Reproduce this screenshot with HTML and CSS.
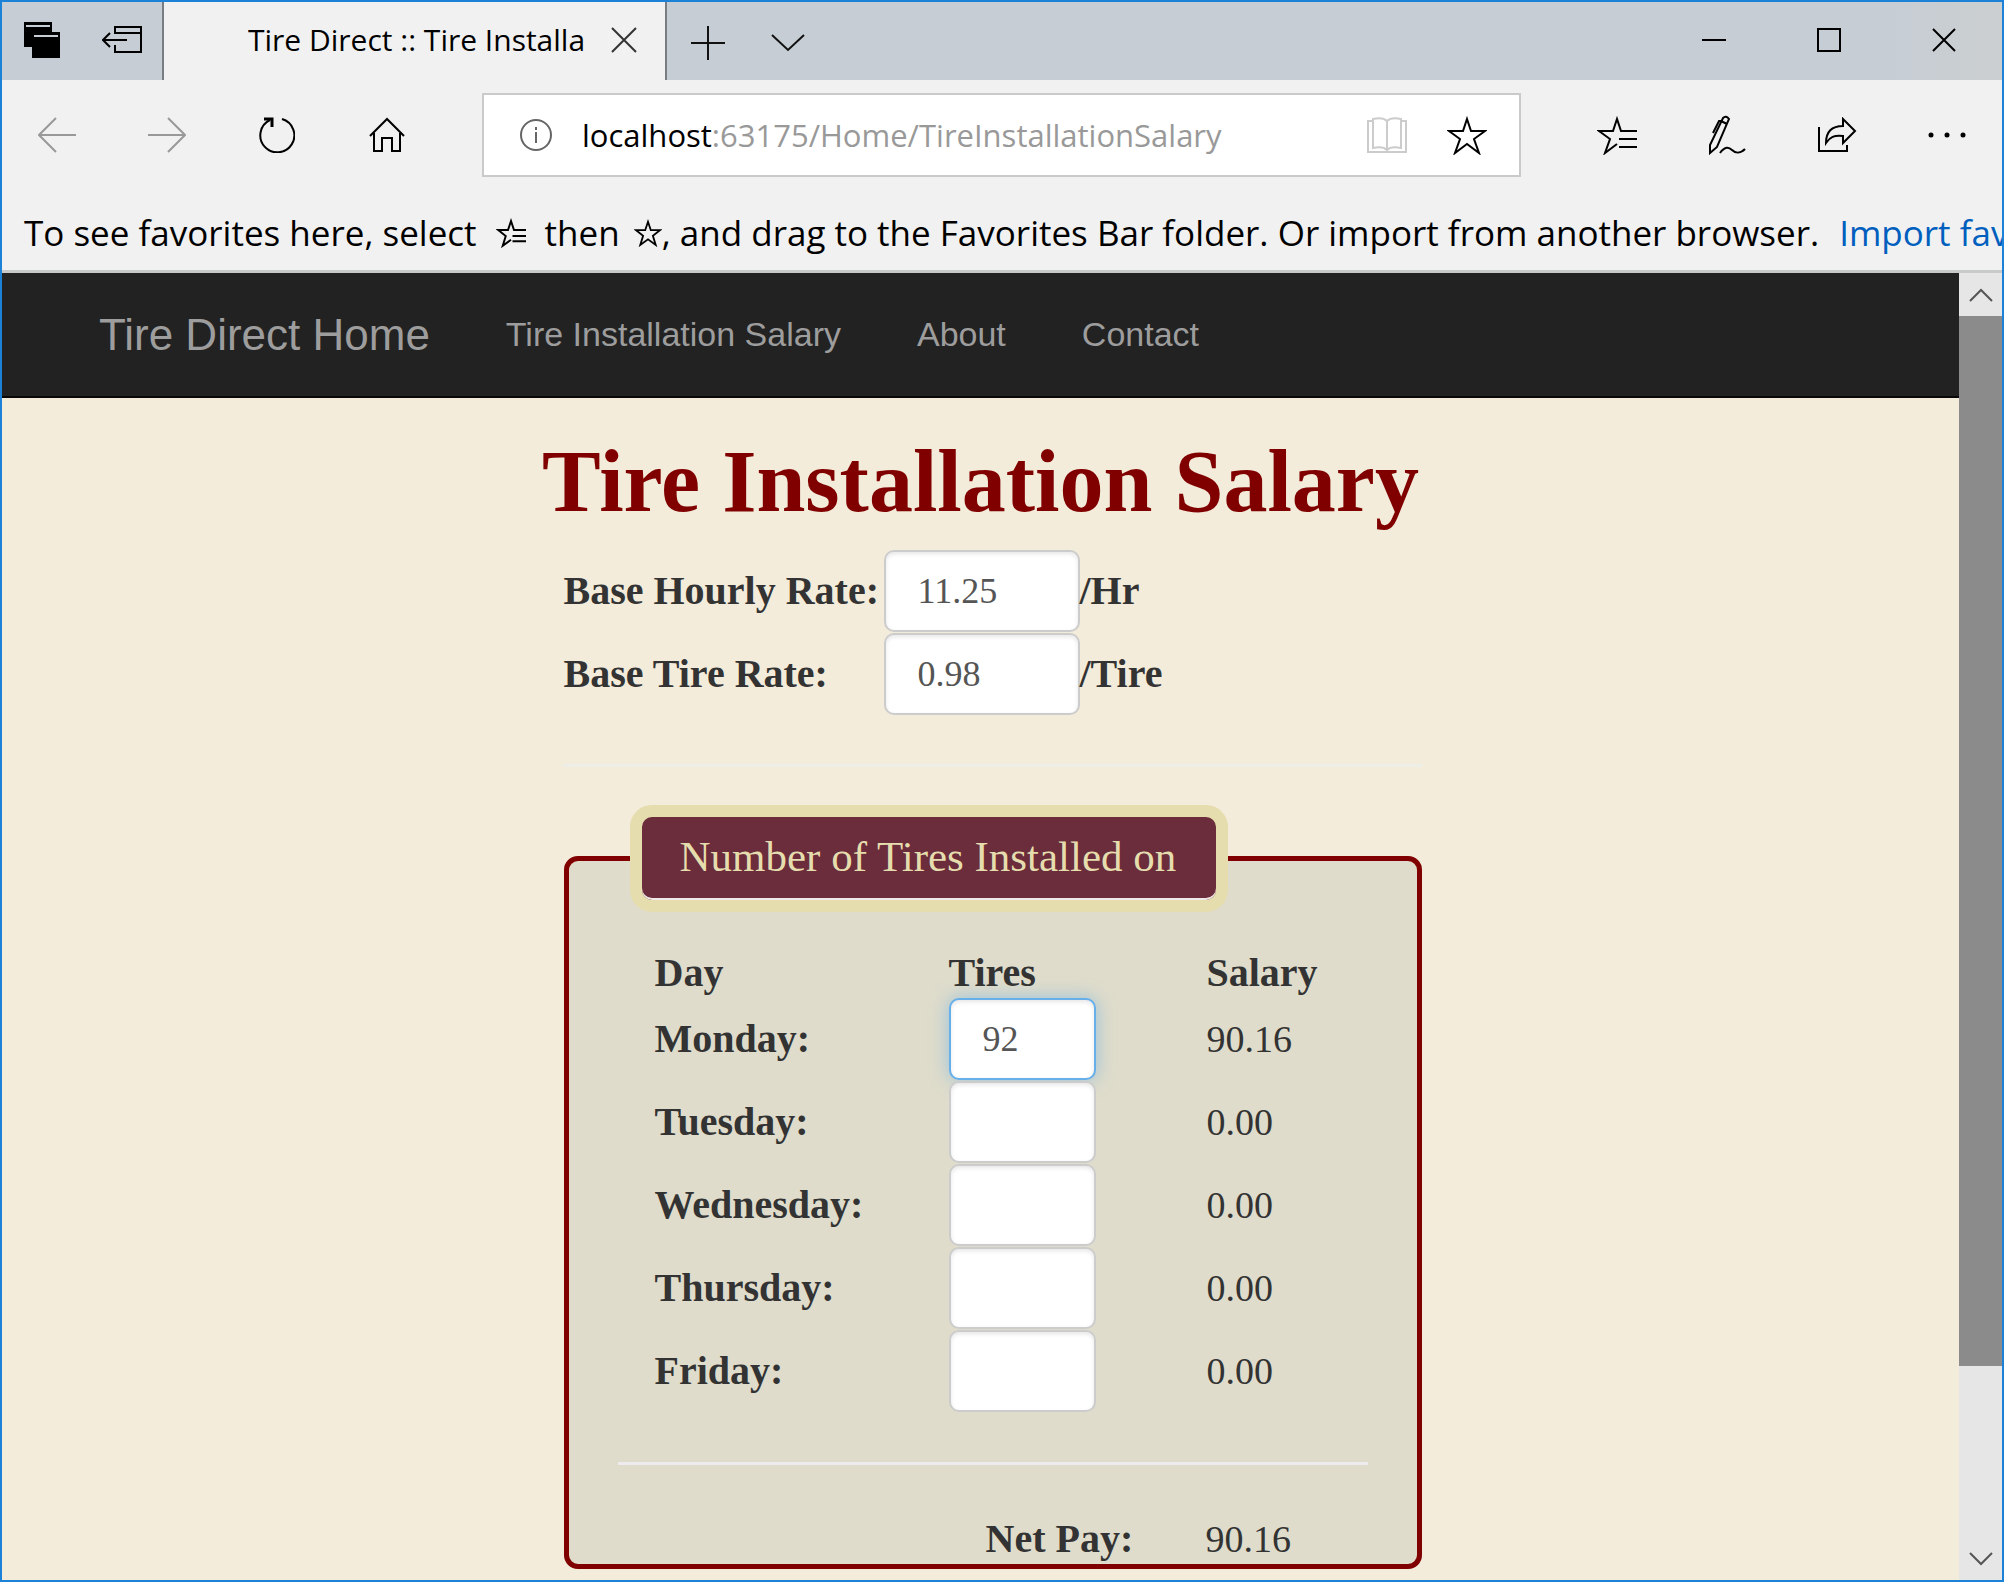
FILE: index.html
```html
<!DOCTYPE html>
<html lang="en">
<head>
<meta charset="utf-8">
<title>Tire Direct :: Tire Installation Salary</title>
<link rel="stylesheet" href="styles.css">
</head>
<body>
<div class="window">
  <header class="tabstrip">
    <div class="tab-tools">
      <button class="icon-btn" aria-label="Tabs you've set aside"><svg width="36" height="36" viewBox="0 0 36 36"><path d="M0 0h28v10h8v26H8V25H0z" fill="#000"/><path d="M2 4h24M10 14h24" stroke="#c6cdd5" stroke-width="2"/></svg></button>
      <button class="icon-btn" aria-label="Set these tabs aside"><svg width="40" height="28" viewBox="0 0 40 28" fill="none" stroke="#000" stroke-width="2"><path d="M13 8V1h26v25H13v-7M13 7h26M25 14H1M8 7l-7 7 7 7"/></svg></button>
    </div>
    <div class="tab">
      <span class="tab-title">Tire Direct :: Tire Installation Salary</span>
      <button class="icon-btn" aria-label="Close tab"><svg width="26" height="26" viewBox="0 0 26 26" stroke="#333" stroke-width="2"><path d="M1 1l24 24M25 1L1 25"/></svg></button>
    </div>
    <div class="new-tab">
      <button class="icon-btn" aria-label="New tab"><svg width="34" height="34" viewBox="0 0 34 34" stroke="#111" stroke-width="2"><path d="M17 0v34M0 17h34"/></svg></button>
      <button class="icon-btn" aria-label="Tab previews"><svg width="34" height="18" viewBox="0 0 34 18" fill="none" stroke="#111" stroke-width="2"><path d="M1 1l16 15L33 1"/></svg></button>
    </div>
    <div class="caption">
      <button class="icon-btn" aria-label="Minimize"><svg width="24" height="24" viewBox="0 0 24 24" stroke="#000" stroke-width="2"><path d="M0 12h24"/></svg></button>
      <button class="icon-btn" aria-label="Maximize"><svg width="24" height="24" viewBox="0 0 24 24" fill="none" stroke="#000" stroke-width="2"><path d="M1 1h22v22H1z"/></svg></button>
      <button class="icon-btn" aria-label="Close"><svg width="24" height="24" viewBox="0 0 24 24" stroke="#000" stroke-width="2"><path d="M1 1l22 22M23 1L1 23"/></svg></button>
    </div>
  </header>

  <div class="toolbar">
    <button class="icon-btn" aria-label="Back"><svg width="38" height="36" viewBox="0 0 38 36" fill="none" stroke="#999" stroke-width="2"><path d="M38 18H1M18 1L1 18l17 17"/></svg></button>
    <button class="icon-btn" aria-label="Forward"><svg width="38" height="36" viewBox="0 0 38 36" fill="none" stroke="#999" stroke-width="2"><path d="M0 18h37M20 1l17 17-17 17"/></svg></button>
    <button class="icon-btn" aria-label="Refresh"><svg width="36" height="36" viewBox="0 0 36 36" fill="none" stroke="#000" stroke-width="2"><path d="M23 2a17 17 0 1 1-12 1"/><path d="M5 2h8v8" stroke-width="3"/></svg></button>
    <button class="icon-btn" aria-label="Home"><svg width="36" height="36" viewBox="0 0 36 36" fill="none" stroke="#000" stroke-width="2"><path d="M1 19L18 2l17 17M5 16v18h8V21h10v13h8V16"/></svg></button>
    <div class="address">
      <svg width="32" height="32" viewBox="0 0 32 32" fill="none" stroke="#666" stroke-width="2"><circle cx="16" cy="16" r="15"/><path d="M16 13v11M16 8v3"/></svg>
      <span class="url">localhost<span class="url-path">:63175/Home/TireInstallationSalary</span></span>
      <button class="icon-btn" aria-label="Reading view"><svg width="40" height="36" viewBox="0 0 40 36" fill="none" stroke="#ccc" stroke-width="2"><path d="M20 4c-3-3-9-3-14-2v29c5-1 11-1 14 2 3-3 9-3 14-2V2c-5-1-11-1-14 2zM20 4v29M6 4H1v31h38V4h-5"/></svg></button>
      <button class="icon-btn" aria-label="Add to favorites"><svg width="40" height="40" viewBox="0 0 40 40" fill="none" stroke="#000" stroke-width="2"><path d="M20 4l4 12h14l-11 8 5 14-12-9-12 9 5-14-11-8h14z"/></svg></button>
    </div>
    <button class="icon-btn" aria-label="Hub"><svg width="40" height="40" viewBox="0 0 40 40" fill="none" stroke="#000" stroke-width="2"><path d="M40 16H24L20 4l-4 12H2l11 8-5 14 12-9M22 24h18M22 32h18"/></svg></button>
    <button class="icon-btn" aria-label="Make a web note"><svg width="38" height="40" viewBox="0 0 38 40" fill="none" stroke="#000" stroke-width="2"><path d="M2 38V30L15 3q3-3 6 1L9 32zM13 6l6 3M15 6h-4L5 18"/><path d="M12 38c5-7 9-6 12-3s8 4 13-1"/></svg></button>
    <button class="icon-btn" aria-label="Share"><svg width="40" height="36" viewBox="0 0 40 36" fill="none" stroke="#000" stroke-width="2"><path d="M2 10v24h28v-6M9 26C9 14 15 9 26 9V2l12 12-12 12v-7C17 18 13 20 9 26z"/></svg></button>
    <button class="icon-btn" aria-label="More"><svg width="38" height="6" viewBox="0 0 38 6"><circle cx="3" cy="3" r="2.5"/><circle cx="19" cy="3" r="2.5"/><circle cx="35" cy="3" r="2.5"/></svg></button>
  </div>

  <div class="favorites">
    <span>To see favorites here, select</span>
    <svg class="fav-hub" width="30" height="30" viewBox="0 0 40 40" fill="none" stroke="#000" stroke-width="2.6"><path d="M40 16H24L20 4l-4 12H3l10 8-4 13 11-8M22 24h18M22 31h18"/></svg>
    <span>then</span>
    <svg class="fav-star" width="28" height="28" viewBox="0 0 40 40" fill="none" stroke="#000" stroke-width="2.6"><path d="M20 4l4 12h13l-10 8 4 13-11-8-11 8 4-13-10-8h13z"/></svg>
    <span>, and drag to the Favorites Bar folder. Or import from another browser.</span>
    <a class="import" href="#">Import favorites</a>
  </div>

  <div class="viewport">
    <div class="page">
      <nav class="navbar">
        <a class="brand" href="#">Tire Direct Home</a>
        <a href="#">Tire Installation Salary</a>
        <a href="#">About</a>
        <a href="#">Contact</a>
      </nav>
      <main class="content">
        <h1>Tire Installation Salary</h1>
        <form>
          <table class="rates">
            <tr><th><label for="hourly">Base Hourly Rate:</label></th><td><input class="field wide" id="hourly" type="text" value="11.25"></td><td>/Hr</td></tr>
            <tr><th><label for="tire">Base Tire Rate:</label></th><td><input class="field wide" id="tire" type="text" value="0.98"></td><td>/Tire</td></tr>
          </table>
          <hr>
          <fieldset>
            <legend>Number of Tires Installed on</legend>
            <table class="days">
              <tr class="head"><th>Day</th><th>Tires</th><th>Salary</th></tr>
              <tr><th><label for="mon">Monday:</label></th><td><input class="field active" id="mon" type="text" value="92"></td><td>90.16</td></tr>
              <tr><th><label for="tue">Tuesday:</label></th><td><input class="field" id="tue" type="text"></td><td>0.00</td></tr>
              <tr><th><label for="wed">Wednesday:</label></th><td><input class="field" id="wed" type="text"></td><td>0.00</td></tr>
              <tr><th><label for="thu">Thursday:</label></th><td><input class="field" id="thu" type="text"></td><td>0.00</td></tr>
              <tr><th><label for="fri">Friday:</label></th><td><input class="field" id="fri" type="text"></td><td>0.00</td></tr>
            </table>
            <hr>
            <div class="net"><strong>Net Pay:</strong><output>90.16</output></div>
          </fieldset>
        </form>
      </main>
    </div>
    <div class="scrollbar">
      <button class="icon-btn" aria-label="Scroll up"><svg width="24" height="14" viewBox="0 0 24 14" fill="none" stroke="#555" stroke-width="2"><path d="M1 13L12 2l11 11"/></svg></button>
      <div class="track"><div class="thumb"></div></div>
      <button class="icon-btn" aria-label="Scroll down"><svg width="24" height="14" viewBox="0 0 24 14" fill="none" stroke="#555" stroke-width="2"><path d="M1 1l11 11L23 1"/></svg></button>
    </div>
  </div>
</div>
</body>
</html>
```
FILE: styles.css
```css
* { box-sizing: border-box; }

body {
  margin: 0;
  color: #000;
  font-family: "Open Sans", "Noto Sans", sans-serif;
}

.window {
  display: flex;
  flex-direction: column;
  height: 100vh;
  overflow: hidden;
  border: 2px solid #1c82d8;
  background: #f1f1f1;
}

.icon-btn {
  display: flex;
  align-items: center;
  justify-content: center;
  flex: none;
  padding: 0;
  border: 0;
  background: none;
}

svg { flex: none; }

/* Tab strip */
.tabstrip {
  display: flex;
  flex: none;
  height: 78px;
  background: linear-gradient(90deg, #c6cdd5 94%, #cbcfd0);
}

.tab-tools {
  display: flex;
  width: 162px;
  padding-bottom: 2px;
  border-right: 2px solid #777d83;
}

.tab-tools .icon-btn { width: 80px; }

.tab {
  display: flex;
  align-items: center;
  width: 503px;
  padding: 0 28px 2px 84px;
  border-right: 2px solid #777d83;
  background: #f1f1f1;
}

.tab-title {
  flex: 1;
  overflow: hidden;
  margin-right: 26px;
  font-size: 30px;
  line-height: 44px;
  white-space: nowrap;
}

.new-tab { display: flex; margin-left: 1px; }
.new-tab .icon-btn { width: 80px; padding-top: 4px; }
.caption { display: flex; margin-left: auto; padding: 0 1px 2px 0; }
.caption .icon-btn { width: 115px; }

/* Toolbar */
.toolbar {
  display: flex;
  flex: none;
  align-items: center;
  height: 110px;
}

.toolbar > .icon-btn { width: 110px; height: 80px; }

.address {
  display: flex;
  flex: 1;
  align-items: center;
  min-width: 0;
  height: 84px;
  margin: 0 41px 0 40px;
  padding: 0 32px 0 36px;
  border: 2px solid #cacaca;
  background: #fff;
}

.address .icon-btn + .icon-btn { margin-left: 40px; }

.url {
  flex: 1;
  margin-left: 30px;
  overflow: hidden;
  font-size: 31px;
  line-height: 44px;
  white-space: nowrap;
}

.url-path { color: #999; }

/* Favorites bar */
.favorites {
  display: flex;
  flex: none;
  align-items: center;
  height: 83px;
  padding: 5px 0 0 22px;
  overflow: hidden;
  border-bottom: 3px solid #c8cac9;
  font-size: 35px;
  line-height: 48px;
  white-space: nowrap;
}

.fav-hub { margin: 0 19px; }
.fav-star { margin-left: 14px; }
.import { margin-left: 20px; color: #005fbe; text-decoration: none; }

/* Web page */
.viewport { display: flex; flex: 1; min-height: 0; }

.page {
  flex: 1;
  overflow: hidden;
  background: #f3ecda;
  color: #333;
  font-family: "Liberation Serif", serif;
}

.navbar {
  display: flex;
  align-items: center;
  gap: 76px;
  height: 125px;
  padding: 0 97px;
  border-bottom: 2px solid #080808;
  background: #222;
  font-family: "Liberation Sans", Arial, sans-serif;
  font-size: 34px;
}

.navbar a { color: #9d9d9d; text-decoration: none; }
.navbar .brand { font-size: 44px; }

.content {
  width: 882px;
  max-width: 100%;
  margin: 0 auto;
  padding-left: 24px;
}

h1 {
  margin: 36px 0 19px -24px;
  color: #800000;
  font-size: 88px;
  line-height: 96px;
  text-align: center;
  white-space: nowrap;
}

table { border-spacing: 0; }
th, td { height: 83px; padding: 0; text-align: left; }
th { font-size: 40px; }
td { font-size: 38px; }

.rates th { width: 320px; }
.rates td:last-child { font-size: 40px; font-weight: bold; }

.field {
  display: block;
  width: 147px;
  height: 82px;
  padding: 0 32px;
  border: 2px solid #ccc;
  border-radius: 10px;
  background: #fff;
  box-shadow: inset 0 2px 4px rgba(0, 0, 0, .1);
  color: #555;
  font-family: inherit;
  font-size: 36px;
}

.wide { width: 196px; }

.active {
  border-color: #66afe9;
  box-shadow: inset 0 2px 4px rgba(0, 0, 0, .1), 0 0 18px rgba(102, 175, 233, .6);
}

hr {
  height: 3px;
  margin: 49px 0 38px;
  border: 0;
  background: #eeeee8;
}

fieldset {
  margin: 0;
  padding: 0 49px;
  border: 5px solid #800000;
  border-radius: 14px;
  background: #dfdccb;
}

legend {
  height: 107px;
  margin-left: 12px;
  padding: 0 40px 0 38px;
  border: 12px solid #e6ddae;
  border-radius: 22px;
  background: #6b2c3b;
  box-shadow: inset 0 -2px #eee8e8;
  color: #e6ddae;
  font-size: 43px;
  line-height: 80px;
}

.days { margin: 35px 0 0 37px; }
.days .head th { height: 50px; }
.days th:first-child { width: 294px; }
.days td:nth-child(2) { width: 258px; }

fieldset hr { margin: 50px 0 49px; background: #eeebee; }

.net {
  display: grid;
  grid-template-columns: 220px 1fr;
  padding-left: 368px;
  font-size: 40px;
  line-height: 50px;
}

.net output { font-size: 38px; }

/* Scrollbar */
.scrollbar {
  display: flex;
  flex: none;
  flex-direction: column;
  width: 43px;
  background: #e6e6e6;
}

.scrollbar .icon-btn { height: 43px; }
.track { flex: 1; }
.thumb { height: 86%; background: #8b8b8b; }
```
